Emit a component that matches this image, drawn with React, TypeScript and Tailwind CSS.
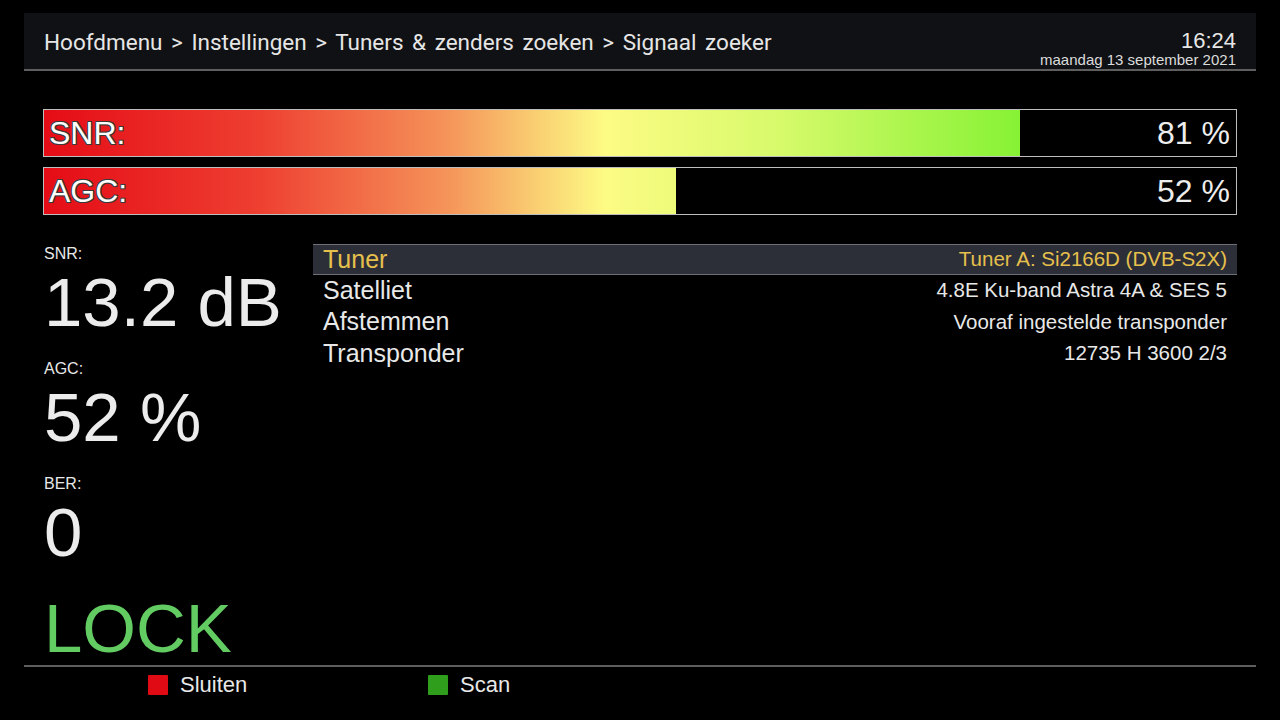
import React from "react";

const Bar = ({ label, value, fill }: { label: string; value: number; fill: number }) => (
  <div className="relative h-[48px] w-full border border-[#bdbdbd] bg-black">
    <div
      className="h-full bg-[linear-gradient(90deg,#e50c16_0%,#ee3f31_18%,#f5955a_34%,#fdfb84_47%,#d6fa6a_62%,#86f234_82%,#6cf020_100%)] bg-no-repeat"
      style={{ width: `${fill}%`, backgroundSize: `${(100 / fill) * 100}% 100%` }}
    />
    <div className="absolute inset-0 flex items-center justify-between pl-[5px] pr-[6px]">
      <span className="text-[32px] leading-none text-white [text-shadow:-1px_-1px_0_#3a3a3a,1px_-1px_0_#3a3a3a,-1px_1px_0_#3a3a3a,1px_1px_0_#3a3a3a]">
        {label}
      </span>
      <span className="text-[32px] leading-none text-[#ededed]">{value} %</span>
    </div>
  </div>
);

const Stat = ({ label, value }: { label: string; value: string }) => (
  <div className="h-[115px]">
    <div className="text-[16px] leading-[20px] text-[#e8e8e8]">{label}</div>
    <div className="mt-[4px] whitespace-nowrap text-[69px] leading-[69px] text-[#ececec]">{value}</div>
  </div>
);

const rows = [
  { l: "Tuner", v: "Tuner A: Si2166D (DVB-S2X)", sel: true },
  { l: "Satelliet", v: "4.8E Ku-band Astra 4A & SES 5" },
  { l: "Afstemmen", v: "Vooraf ingestelde transponder" },
  { l: "Transponder", v: "12735 H 3600 2/3" },
];

export default function App() {
  return (
    <div className="relative h-[720px] w-[1280px] overflow-hidden bg-black font-['Liberation_Sans',Arial,sans-serif] text-[#e8e8e8]">
      {/* Header */}
      <div className="mx-[24px] mt-[13px] flex h-[58px] items-start justify-between border-b-2 border-[#5e5e5e] bg-[#101114] px-[20px]">
        <div className="whitespace-nowrap pt-[16px] font-['Roboto',sans-serif] text-[22.5px] leading-[26px] text-[#e6e6e6] [word-spacing:3px]">
          Hoofdmenu &gt; Instellingen &gt; Tuners &amp; zenders zoeken &gt; Signaal zoeker
        </div>
        <div className="flex flex-col items-end pt-[17px]">
          <div className="text-[22px] leading-[22px] text-[#e6e6e6]">16:24</div>
          <div className="text-[15px] leading-[15px] text-[#dcdcdc]">maandag 13 september 2021</div>
        </div>
      </div>

      {/* Bars */}
      <div className="mx-[43px] mt-[38px] flex flex-col gap-[10px]">
        <Bar label="SNR:" value={81} fill={81.9} />
        <Bar label="AGC:" value={52} fill={53} />
      </div>

      {/* Main */}
      <div className="mt-[29px] flex h-[421px]">
        <div className="w-[313px] shrink-0 pl-[44px]">
          <Stat label="SNR:" value="13.2 dB" />
          <Stat label="AGC:" value="52 %" />
          <Stat label="BER:" value="0" />
          <div className="mt-[5px] text-[69px] leading-[69px] text-[#62cc62]">LOCK</div>
        </div>
        <div className="mr-[43px] flex-1">
          {rows.map((r) => (
            <div
              key={r.l}
              className={
                r.sel
                  ? "flex h-[31px] items-center justify-between border-y border-[#6e7078] bg-[#2c2e38] px-[10px] text-[#e6c04c]"
                  : "flex h-[31.33px] items-center justify-between px-[10px] text-[#e8e8e8]"
              }
            >
              <span className="text-[25px] leading-none">{r.l}</span>
              <span className="text-[20.5px] leading-none">{r.v}</span>
            </div>
          ))}
        </div>
      </div>

      {/* Footer */}
      <div className="mx-[24px] flex h-[38px] items-center border-t-2 border-[#5e5e5e] pl-[124px]">
        <div className="flex w-[280px] items-center gap-[12px]">
          <span className="h-[20px] w-[20px] rounded-[1px] bg-[#e00a14]" />
          <span className="text-[22px] leading-none text-[#e8e8e8]">Sluiten</span>
        </div>
        <div className="flex items-center gap-[12px]">
          <span className="h-[20px] w-[20px] rounded-[1px] bg-[#2e9e1c]" />
          <span className="text-[22px] leading-none text-[#e8e8e8]">Scan</span>
        </div>
      </div>
    </div>
  );
}
